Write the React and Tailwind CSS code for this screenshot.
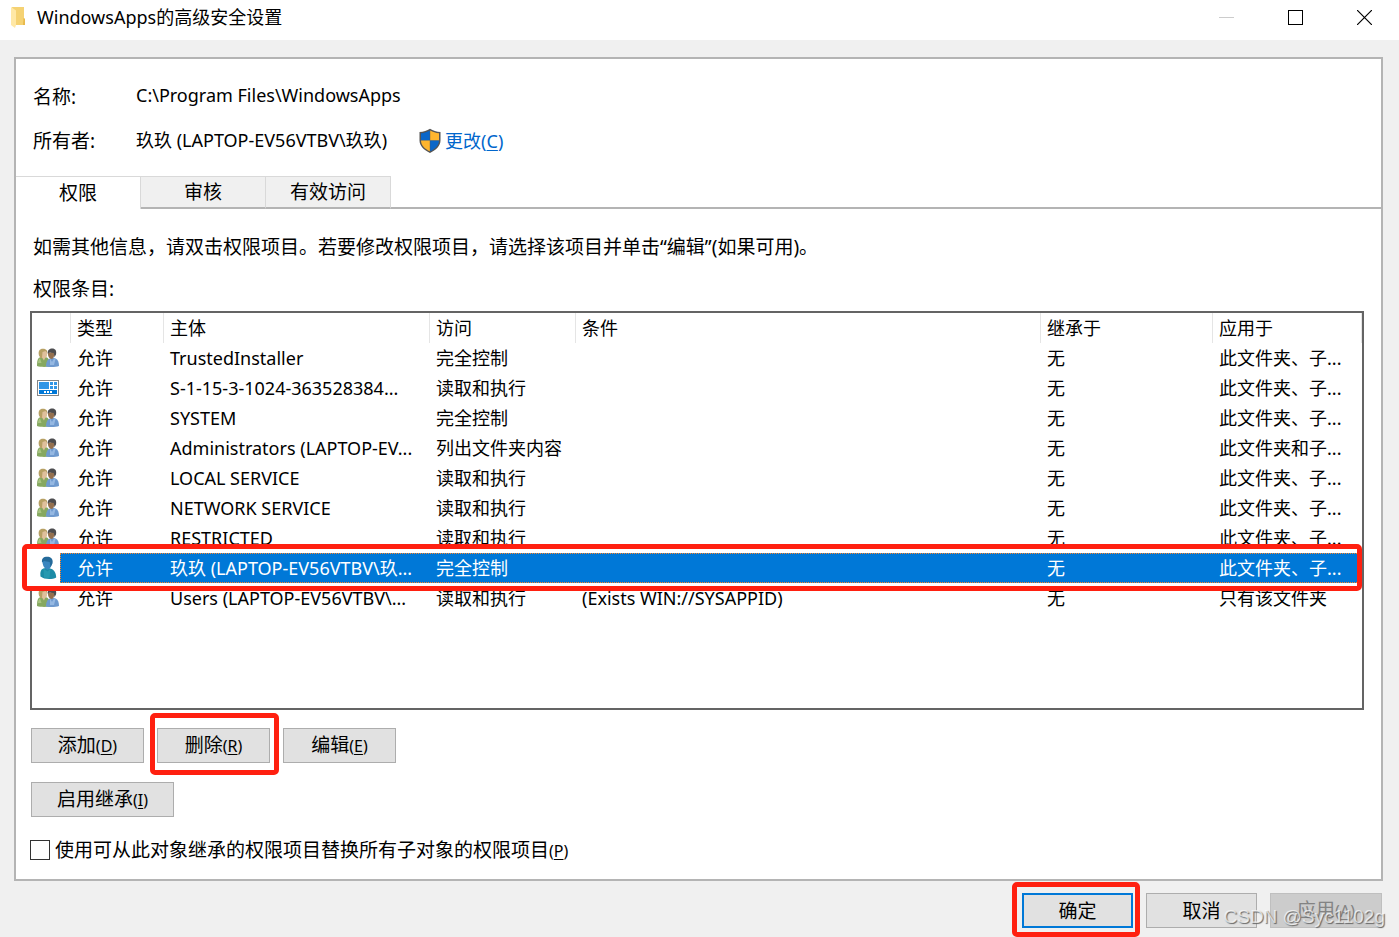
import React, { useState } from "react";

const columns = [
  { key: "type", label: "类型", width: "w-[93px]" },
  { key: "principal", label: "主体", width: "w-[266px]" },
  { key: "access", label: "访问", width: "w-[146px]" },
  { key: "condition", label: "条件", width: "" },
  { key: "inherited", label: "继承于", width: "w-[172px]" },
  { key: "applies", label: "应用于", width: "w-[149px]" }
];

const entries = [
  { icon: "group", type: "允许", principal: "TrustedInstaller", access: "完全控制", inherited: "无", applies: "此文件夹、子..." },
  { icon: "app", type: "允许", principal: "S-1-15-3-1024-363528384...", access: "读取和执行", inherited: "无", applies: "此文件夹、子..." },
  { icon: "group", type: "允许", principal: "SYSTEM", access: "完全控制", inherited: "无", applies: "此文件夹、子..." },
  { icon: "group", type: "允许", principal: "Administrators (LAPTOP-EV...", access: "列出文件夹内容", inherited: "无", applies: "此文件夹和子..." },
  { icon: "group", type: "允许", principal: "LOCAL SERVICE", access: "读取和执行", inherited: "无", applies: "此文件夹、子..." },
  { icon: "group", type: "允许", principal: "NETWORK SERVICE", access: "读取和执行", inherited: "无", applies: "此文件夹、子..." },
  { icon: "group", type: "允许", principal: "RESTRICTED", access: "读取和执行", inherited: "无", applies: "此文件夹、子..." },
  { icon: "user", type: "允许", principal: "玖玖 (LAPTOP-EV56VTBV\\玖...", access: "完全控制", inherited: "无", applies: "此文件夹、子..." },
  { icon: "group", type: "允许", principal: "Users (LAPTOP-EV56VTBV\\...", access: "读取和执行", condition: "(Exists WIN://SYSAPPID)", inherited: "无", applies: "只有该文件夹" }
];

function GroupIcon() {
  return (
    <svg width="22" height="20" viewBox="0 0 22 20" className="block">
      <path d="M0 18c0-4 .4-7.500 2.500-8.500L6 8.500l4 1c2 .8 2.500 3.500 2.500 9C8 19.200 3 19 0 18z" fill="#86a860" />
      <path d="M1 15c.2-2.500.8-4 2-4.800L4.500 15z" fill="#a8c480" />
      <path d="M2 7.500C.8 3.500 2.500.8 6 .8s5 2.200 4 6L8.500 10H3.500z" fill="#b7a064" />
      <path d="M5.500 4L8.500 3l1.700 2-.5 3.500L8 10.200 7 12.500 5 9.500z" fill="#dfc09c" />
      <path d="M9 18.500c0-4.500 1.500-7.500 4.500-8.300l2.500-.6 2.500.8c2.600 1 3.500 4 3.500 7.600-3 1.200-9 1.500-13 .5z" fill="#6f9ace" />
      <path d="M13 10.500L15 14l2-3.500 1.500.4L17 17h-4z" fill="#95b8e2" />
      <path d="M11 5l6-1.500c.8 3.500-.1 6.500-2 7.500l-2.200-.5C11.300 9 10.800 7 11 5z" fill="#94704f" />
      <path d="M10.800 5.500C10.500 2 12.500.6 15.300.6c3 0 4.600 2.300 3.700 6l-1.500 2.600-.7-4.200-3.800-.6z" fill="#4d4d50" />
    </svg>
  );
}

function UserIcon() {
  return (
    <svg width="18" height="24" viewBox="0 0 18 24" className="block">
      <path d="M1.500 20.500C1 16.500 1.500 13.500 4.500 12.500L8 11.500l4 1.300c3.500 1.200 5 4.500 5.200 8.700C13 23.800 5 23.500 1.500 20.500z" fill="#1c8ba6" />
      <path d="M4.500 12.500L8.500 15.500l3-2.700L10.500 22 5 21.500z" fill="#2899b0" />
      <path d="M3.500 6.500C3 2.500 5 1 8 1s5.300 2 5 5.700c-.2 3-1.800 6.500-4.500 7C6 13 3.800 10 3.500 6.500z" fill="#3a86bf" />
      <path d="M3 6.500C2.500 2.500 4.500.8 8.200.8c3.800 0 6.300 2.500 5.300 6.700L11.500 11l-.8-5L5 5z" fill="#246a9a" />
    </svg>
  );
}

function AppIcon() {
  return (
    <svg width="22" height="16" viewBox="0 0 22 16" className="block" shapeRendering="crispEdges">
      <rect width="22" height="16" fill="#858585" />
      <rect x="1" y="1" width="20" height="14" fill="#fff" />
      <path d="M2 2h10v7H2zM13 2h3v3h-3zM17 2h3v3h-3zM13 6h3v3h-3zM17 6h3v3h-3z" fill="#3296e6" />
      <rect x="2" y="10" width="18" height="4" fill="#0078d7" />
      <path d="M7 11h2v2H7zM10 11h2v2h-2zM13 11h2v2h-2z" fill="#fff" />
    </svg>
  );
}

function ShieldIcon() {
  return (
    <svg width="24" height="26" viewBox="0 0 24 26" className="block">
      <path d="M12 .8c3 2 6.500 3 10.500 3.200v8.500c0 5.500-4.500 9.500-10.500 12.500C6 22 1.500 18 1.500 12.500V4C5.500 3.800 9 2.800 12 .8z" fill="#555" />
      <path d="M11.800 2.500v10H3V5.200c3.300-.2 6.200-1.100 8.800-2.700z" fill="#0a66c8" />
      <path d="M12.200 2.500v10H21V5.200c-3.300-.2-6.200-1.100-8.800-2.700z" fill="#ffb52e" />
      <path d="M3 12.500h8.800v10.800C7 21 3 17.500 3 12.500z" fill="#ffb52e" />
      <path d="M21 12.500h-8.800v10.800C17 21 21 17.500 21 12.500z" fill="#0a66c8" />
    </svg>
  );
}

function FolderIcon() {
  return (
    <svg width="14" height="22" viewBox="0 0 14 22" className="block">
      <path d="M1 1h12v11l1 1v6H3z" fill="#f5d273" />
      <path d="M12.500 12l1.500 1v6h-2z" fill="#e8b94c" />
      <path d="M0 1l5 3.500V19l-1 3-4-3z" fill="#ffe8a6" />
    </svg>
  );
}

const icons = { group: GroupIcon, user: UserIcon, app: AppIcon };

// Shortcut letter after a label, e.g. (D)
function Key({ letter, className = "text-base" }) {
  return (
    <span className={className}>
      (<span className="underline underline-offset-2">{letter}</span>)
    </span>
  );
}

function Callout({ className }) {
  return <span className={`absolute pointer-events-none border-5 border-[#ff2010] rounded-[5px] ${className}`} />;
}

const buttonStyles = {
  normal: "border border-[#adadad] bg-[#e1e1e1]",
  primary: "border-2 border-[#0078d7] bg-[#e1e1e1]",
  disabled: "border border-[#bfbfbf] bg-[#cccccc] text-[#838383]"
};

function Button({ children, variant = "normal", width = "w-[113px]", ...props }) {
  return (
    <button
      type="button"
      className={`h-[35px] text-[19px] leading-6 whitespace-nowrap ${width} ${buttonStyles[variant]}`}
      {...props}
    >
      {children}
    </button>
  );
}

function App() {
  const [selected, setSelected] = useState(7);
  const [tab, setTab] = useState("权限");
  const [replaceAll, setReplaceAll] = useState(false);

  return (
    <div className="relative min-h-screen flex flex-col bg-[#f0f0f0] text-black font-['Noto_Sans','Noto_Sans_CJK_SC',sans-serif]">
      {/* Title bar */}
      <header className="h-10 bg-white flex items-start pl-[11px]">
        <div className="pt-1.5">
          <FolderIcon />
        </div>
        <h1 className="ml-3 flex-1 text-lg leading-[35px]">WindowsApps的高级安全设置</h1>
        <div className="flex h-[35px]">
          <button type="button" aria-label="最小化" disabled className="w-[70px] flex items-center justify-center">
            <span className="w-[15px] h-px bg-[#ccc]" />
          </button>
          <button type="button" aria-label="最大化" className="w-[69px] flex items-center justify-center">
            <span className="size-[15px] border border-black" />
          </button>
          <button type="button" aria-label="关闭" className="w-[69px] flex items-center justify-center">
            <svg width="15" height="15" viewBox="0 0 15 15" stroke="#000" strokeWidth="1.2">
              <path d="M0 0L15 15M15 0L0 15" />
            </svg>
          </button>
        </div>
      </header>

      <main className="flex-1 flex flex-col mt-[17px] ml-3.5 mr-4 border-2 border-[#b4b4b4] bg-white">
        {/* Object name and owner */}
        <dl className="pt-6 pl-[17px] text-lg">
          <div className="flex h-7">
            <dt className="w-[103px] text-[19px] leading-[29px]">名称:</dt>
            <dd className="leading-6">C:\Program Files\WindowsApps</dd>
          </div>
          <div className="flex h-7 mt-4">
            <dt className="w-[103px] text-[19px] leading-[29px]">所有者:</dt>
            <dd className="leading-[26px]">玖玖 (LAPTOP-EV56VTBV\玖玖)</dd>
            <dd className="ml-[31px]">
              <a href="#owner" className="flex items-center gap-[3px] leading-[26px] text-[#0066cc]">
                <ShieldIcon />
                <span>更改<Key letter="C" className="text-lg" /></span>
              </a>
            </dd>
          </div>
        </dl>

        <div role="tablist" className="flex mt-[21px] h-[33px] text-[19px]">
          {["权限", "审核", "有效访问"].map((name) => (
            <button
              key={name}
              type="button"
              role="tab"
              aria-selected={tab === name}
              onClick={() => setTab(name)}
              className={`w-[125px] border-t border-r border-[#d9d9d9] ${
                tab === name ? "bg-white" : "bg-[#f0f0f0] border-b-2 border-b-[#b4b4b4]"
              }`}
            >
              {name}
            </button>
          ))}
          <div className="flex-1 border-b-2 border-[#b4b4b4]" />
        </div>

        <section className="flex-1 flex flex-col pl-3.5 pr-[17px] text-[19px]">
          <p className="mt-6 pl-[3px] leading-7">
            如需其他信息，请双击权限项目。若要修改权限项目，请选择该项目并单击<span className="font-['Noto_Sans']">“</span>编辑<span className="font-['Noto_Sans']">”</span>(如果可用)。
          </p>
          <h2 className="mt-3.5 pl-[3px] leading-7">权限条目:</h2>

          <div className="flex-1 mt-2 border-2 border-[#646464]">
            <table className="w-full table-fixed border-separate border-spacing-0 text-lg leading-6">
              <thead>
                <tr className="h-[30px]">
                  <th className="w-[39px] p-0 border-r border-[#e5e5e5]" aria-label="图标" />
                  {columns.map((col) => (
                    <th
                      key={col.key}
                      className={`${col.width} p-0 pl-1.5 border-r border-[#e5e5e5] text-left font-normal`}
                    >
                      {col.label}
                    </th>
                  ))}
                </tr>
              </thead>
              <tbody>
                {entries.map((entry, index) => {
                  const Icon = icons[entry.icon];
                  const active = index === selected;
                  return (
                    <tr
                      key={entry.principal}
                      onClick={() => setSelected(index)}
                      className={`h-[30px] ${active ? "relative text-white" : ""}`}
                    >
                      <td className="p-0">
                        {active && (
                          <>
                            <Callout className="z-0 bg-white -left-2.5 right-0 -top-[9px] -bottom-2" />
                            <span className="absolute z-10 left-7 right-[5px] inset-y-0 bg-[#0078d7] border border-r-0 border-dotted border-[#ff8728]" />
                          </>
                        )}
                        <div className={`w-7 flex justify-center pl-1 ${active ? "relative z-20" : ""}`}>
                          <Icon />
                        </div>
                      </td>
                      {columns.map((col) => (
                        <td
                          key={col.key}
                          className={`p-0 pl-1.5 whitespace-nowrap ${active ? "relative z-20" : ""}`}
                        >
                          {entry[col.key]}
                        </td>
                      ))}
                    </tr>
                  );
                })}
              </tbody>
            </table>
          </div>

          {/* Actions */}
          <div className="flex gap-[13px] mt-[18px] pl-px">
            <Button>添加<Key letter="D" /></Button>
            <div className="relative">
              <Button>删除<Key letter="R" /></Button>
              <Callout className="-left-[7px] -right-[9px] -top-[15px] -bottom-3" />
            </div>
            <Button>编辑<Key letter="E" /></Button>
          </div>
          <div className="mt-[19px] pl-px flex">
            <Button width="w-[143px]">启用继承<Key letter="I" /></Button>
          </div>
          <label className="flex items-center gap-[5px] mt-[19px] mb-[15px] leading-7">
            <input
              type="checkbox"
              checked={replaceAll}
              onChange={(e) => setReplaceAll(e.target.checked)}
              className="appearance-none size-5 border border-[#333] bg-white checked:bg-[#0078d7]"
            />
            <span>使用可从此对象继承的权限项目替换所有子对象的权限项目<Key letter="P" /></span>
          </label>
        </section>
      </main>

      <footer className="flex justify-end gap-[13px] pt-3 pb-[9px] pr-[17px]">
        <div className="relative">
          <Button variant="primary" width="w-[111px]">确定</Button>
          <Callout className="-left-2.5 -right-[7px] -top-[11px] -bottom-[9px]" />
        </div>
        <Button width="w-[111px]">取消</Button>
        <Button disabled variant="disabled" width="w-[112px]">
          应用<Key letter="A" />
        </Button>
      </footer>

      <span className="absolute right-3.5 bottom-2 text-[19px] leading-6 text-white/70 font-['Liberation_Sans'] [text-shadow:1px_1px_1px_#666] pointer-events-none">
        CSDN @Syc1102g
      </span>
    </div>
  );
}

export default App;
